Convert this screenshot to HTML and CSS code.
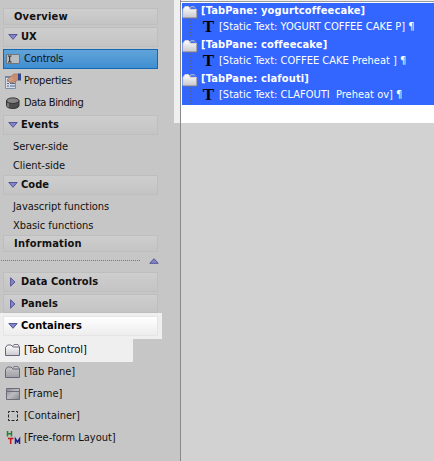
FILE: index.html
```html
<!DOCTYPE html>
<html lang="en">
<head>
<meta charset="utf-8">
<title>Controls</title>
<link rel="stylesheet" href="styles.css">
</head>
<body>
<svg class="defs" width="0" height="0">
  <defs>
    <linearGradient id="silver" x1="0" y1="0" x2="1" y2="1"><stop offset="0" stop-color="#888892"/><stop offset=".5" stop-color="#bdbdc0"/><stop offset="1" stop-color="#85858f"/></linearGradient>
    <linearGradient id="paper" x1="0" y1="0" x2="0" y2="1"><stop offset="0" stop-color="#ffffff"/><stop offset="1" stop-color="#c9c9d0"/></linearGradient>
    <linearGradient id="muted" x1="0" y1="0" x2="0" y2="1"><stop offset="0" stop-color="#c9c9c9"/><stop offset="1" stop-color="#9d9da4"/></linearGradient>
    <symbol id="down" viewBox="0 0 10 6"><path d="M.8.5h8.4L5 5.3z" fill="#8585c8" stroke="#4c4c94" stroke-width=".9"/></symbol>
    <symbol id="up" viewBox="0 0 10 6"><path d="M.8 5.3h8.4L5 .7z" fill="#8585c8" stroke="#4c4c94" stroke-width=".9"/></symbol>
    <symbol id="right" viewBox="0 0 6 10"><path d="M.6.8v8.4L5 5z" fill="#8585c8" stroke="#4c4c94" stroke-width=".9"/></symbol>
    <symbol id="tabs" viewBox="0 0 16 14"><path d="M.5 12.500v-8l2-2.500h3.500l2 2h6.500v8.500z" stroke="#66667a"/><path d="M7.500 3.500l1.500-2h4l1.500 2.500" fill="none" stroke="#77778a"/></symbol>
    <symbol id="folder" viewBox="0 0 16 14"><path d="M8 3.500l1-2h3l1.500 2" fill="#5b7fe8" stroke="#a3aed0"/><path d="M1 12.500V4.500l2-3h3.500l2 3H14.500v8z" fill="url(#paper)" stroke="#d8d4cc"/><path d="M1 13h14V5" fill="none" stroke="#77778c"/></symbol>
  </defs>
</svg>
<div class="app">
  <nav class="side">
    <div class="head plain">Overview</div>
    <div class="head"><svg class="tri"><use href="#down"/></svg><span>UX</span></div>
    <div class="item active"><svg class="icon" viewBox="0 0 16 14"><path d="M1.500 2.500h13v9h-13z" fill="#b9bcc0" stroke="#6f777f"/><path d="M3 4h1.500M5 4h1.500M4.700 4v6M3 10h1.500M5 10h1.500" stroke="#222" fill="none"/></svg><span>Controls</span></div>
    <div class="item data"><svg class="icon" viewBox="0 0 16 16"><path d="M.5 3.500h10v12h-10z" fill="#d5dbe4" stroke="#7c8fa8"/><path d="M0 3h9v2H0z" fill="#7286a5"/><path d="M2 8h2M2 10.500h2M2 13h2M5 10.500h5M5 13h5" stroke="#50678a"/><path d="M2 7l3-3 4-3h5v5l-4 3-5 1-1-2z" fill="#c98e70" stroke="#976650" stroke-width=".6"/><path d="M3 6.500l4-2M4 8l4-2" stroke="#e1b197" stroke-width=".7"/><path d="M13 .5h3v7h-3z" fill="#34468b"/></svg><span>Properties</span></div>
    <div class="item data"><svg class="icon" viewBox="0 0 16 14"><path d="M1.500 4.500v5c0 4 12.500 4 12.500 0v-5z" fill="#4c4c4c" stroke="#333"/><path d="M3 7v4" stroke="#aaa"/><ellipse cx="7.750" cy="4.700" rx="6.200" ry="2.800" fill="#858585" stroke="#333"/></svg><span class="tight">Data Binding</span></div>
    <div class="head events"><svg class="tri"><use href="#down"/></svg><span>Events</span></div>
    <div class="link">Server-side</div>
    <div class="link">Client-side</div>
    <div class="head code"><svg class="tri"><use href="#down"/></svg><span>Code</span></div>
    <div class="link">Javascript functions</div>
    <div class="link">Xbasic functions</div>
    <div class="head plain info">Information</div>
    <div class="divider"><i></i><svg class="tri"><use href="#up"/></svg></div>
    <div class="head"><svg class="tri side-tri"><use href="#right"/></svg><span>Data Controls</span></div>
    <div class="head panels"><svg class="tri side-tri"><use href="#right"/></svg><span>Panels</span></div>
    <div class="spot"><div class="head bright"><svg class="tri"><use href="#down"/></svg><span>Containers</span></div></div>
    <div class="item box lit"><svg class="icon" fill="url(#paper)"><use href="#tabs"/></svg><span>[Tab Control]</span></div>
    <div class="item box first"><svg class="icon" fill="url(#muted)"><use href="#tabs"/></svg><span>[Tab Pane]</span></div>
    <div class="item box"><svg class="icon" viewBox="0 0 16 14"><path d="M1.500 1.500h13v11h-13z" fill="url(#silver)" stroke="#6d6d7a"/><path d="M2 4.500h12" stroke="#6d6d7a"/></svg><span>[Frame]</span></div>
    <div class="item box"><svg class="icon" viewBox="0 0 16 14"><path d="M3.500 2.500h9v9h-9z" fill="none" stroke="#222" stroke-dasharray="3 1.500" stroke-dashoffset="1.500"/></svg><span>[Container]</span></div>
    <div class="item box"><svg class="icon" viewBox="0 0 16 14"><path d="M2.500 0v5.500M6.500 0v5.500M2 2.800h5" stroke="#258030" stroke-width="1.500"/><path d="M3 7.500h5.500M5.700 7v6" stroke="#c81616" stroke-width="1.500"/><path d="M10.500 13V8l2 3 2-3v5" fill="none" stroke="#20208c" stroke-width="1.500"/></svg><span>[Free-form Layout]</span></div>
  </nav>
  <main class="main">
    <div class="tree">
      <div class="pane"><svg class="fold"><use href="#folder"/></svg><b>[TabPane: yogurtcoffeecake]</b></div>
      <div class="text"><i class="t">T</i><span>[Static Text: YOGURT COFFEE CAKE P] ¶</span></div>
      <div class="pane"><svg class="fold"><use href="#folder"/></svg><b>[TabPane: coffeecake]</b></div>
      <div class="text"><i class="t">T</i><span>[Static Text: COFFEE CAKE Preheat ] ¶</span></div>
      <div class="pane"><svg class="fold"><use href="#folder"/></svg><b>[TabPane: clafouti]</b></div>
      <div class="text"><i class="t">T</i><span>[Static Text: CLAFOUTI&nbsp; Preheat ov] ¶</span></div>
    </div>
  </main>
</div>
</body>
</html>
```
FILE: styles.css
```css
* { box-sizing: border-box; }
body { margin: 0; background: #c6c6c6; color: #111; font: 11px/16px "DejaVu Sans Condensed", "DejaVu Sans", sans-serif; font-stretch: condensed; letter-spacing: -0.2px; }
.defs { position: absolute; }
.app { display: flex; width: 434px; height: 461px; overflow: hidden; }
.side { width: 174px; padding-top: 8px; flex: none; white-space: nowrap; }
.head { display: flex; align-items: center; width: 155px; height: 20px; margin: 0 0 2px 3px; padding: 0 0 0 4px; border: 1px solid #bebebe; background: linear-gradient(#cecece, #c4c4c4); font-weight: bold; letter-spacing: 0.04px; }
.plain { height: 17px; padding: 1px 0 0 10px; letter-spacing: 0.2px; }
.tri { width: 10px; height: 6px; margin-right: 3px; flex: none; }
.side-tri { width: 6px; height: 10px; margin: 0 6px 0 2px; }
.side-tri + span { margin-left: -1px; }
.item { display: flex; align-items: center; height: 22px; padding: 0 0 1px 5px; }
.icon { width: 16px; height: 16px; margin-right: 3px; flex: none; }
.active { width: 155px; height: 20px; margin-left: 3px; padding: 0 0 1px 1px; border: 1px solid #1268b3; background: linear-gradient(#62a3d8, #3f8fd2); }
.data { padding: 2px 0 0 5px; }
.tight { letter-spacing: -0.4px; }
.events { margin-top: 2px; }
.link { height: 18px; margin-bottom: 1px; padding-left: 13px; line-height: 20px; letter-spacing: -0.05px; }
.info { margin: 0 0 0 3px; }
.divider { display: flex; align-items: center; height: 20px; padding: 0 0 3px 1px; }
.divider i { width: 139px; height: 1px; margin-right: 9px; background: repeating-linear-gradient(90deg, #777 0 1px, transparent 1px 2px); }
.panels { height: 19px; margin-bottom: 0; }
.spot { width: 162px; height: 26px; padding-top: 3px; background: #efefef; }
.bright { margin-bottom: 0; border-color: #e5e5e5; background: linear-gradient(#fff, #ededed); color: #000; }
.box { letter-spacing: -0.02px; }
.lit { width: 133px; height: 23px; padding-bottom: 2px; background: #efefef; color: #000; }
.first { height: 21px; }
.main { width: 260px; height: 461px; padding-left: 6px; background: linear-gradient(#efefef 0 123px, #c6c6c6 123px); }
.tree { height: 461px; padding-left: 1px; padding-top: 3px; border-left: 1px solid #888; background: linear-gradient(#efefef 0 1px, #999 1px 2px, #fff 2px 123px, #d2d2d2 123px); color: #fff; white-space: nowrap; }
.pane, .text { display: flex; align-items: center; height: 17px; background: #3366ff; }
.pane b { letter-spacing: 0.15px; padding-bottom: 1px; }
.fold { width: 16px; height: 14px; margin-right: 3px; flex: none; }
.text { padding-left: 8px; letter-spacing: 0; }
.text::before { content: ""; width: 1px; height: 17px; background: repeating-linear-gradient(#555d75 0 1px, transparent 1px 3px); }
.t { width: 23px; margin-right: 5px; padding-bottom: 4px; color: #000; font: bold 17px/17px "Liberation Serif", serif; text-align: right; }
.t + span { padding-bottom: 3px; }
```
